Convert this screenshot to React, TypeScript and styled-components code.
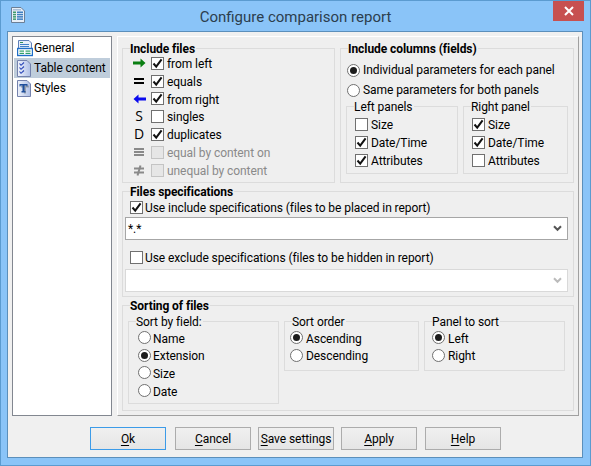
import React from 'react';
import styled, { createGlobalStyle } from 'styled-components';

const GlobalStyle = createGlobalStyle`
  html, body { margin: 0; padding: 0; background: #8ac4f8; }
  #root { width: 591px; height: 466px; overflow: hidden; }
  * { box-sizing: border-box; }
`;

const UI_FONT = `Roboto, "Noto Sans", sans-serif`;

// Window frame
const Window = styled.div`
  width: 591px;
  height: 466px;
  display: flex;
  flex-direction: column;
  background: #8ac4f8;
  border: 1px solid #5b9bd0;
  font-family: ${UI_FONT};
  font-size: 12px;
  letter-spacing: -0.07px;
  color: #000;
`;

const TitleBar = styled.div`
  position: relative;
  height: 30px;
  flex: none;
  display: flex;
  align-items: center;
  justify-content: center;
`;

const TitleIcon = styled.div`
  position: absolute;
  left: 10px;
  top: 6px;
  display: flex;
`;

const TitleText = styled.div`
  font-size: 15px;
  letter-spacing: 0;
  color: #2c3e4e;
  margin-top: 1px;
`;

const CloseButton = styled.div`
  position: absolute;
  right: 6px;
  top: 0;
  width: 31px;
  height: 20px;
  background: #c75050;
  display: flex;
  align-items: center;
  justify-content: center;
`;

const Client = styled.div`
  flex: 1;
  margin: 0 7px 7px 6px;
  background: #f0f0f0;
  border: 1px solid #5b8fbb;
  display: flex;
  flex-direction: column;
  padding: 4px 4px 0 4px;
`;

const Body = styled.div`
  display: flex;
  gap: 5px;
  height: 380px;
`;

// Left navigation list
const NavList = styled.div`
  width: 100px;
  flex: none;
  background: #fff;
  border: 1px solid #828790;
  padding: 1px;
  display: flex;
  flex-direction: column;
`;

const NavItem = styled.div<{ $active?: boolean }>`
  height: 20px;
  display: flex;
  align-items: center;
  gap: 1px;
  padding-left: 3px;
  white-space: nowrap;
  background: ${p => (p.$active ? '#bfcddb' : 'transparent')};
`;

const MainPanel = styled.div`
  width: 462px;
  flex: none;
  background: #efefef;
  border: 1px solid #a0a0a0;
  border-top-color: #fff;
  border-left-color: #fff;
  padding: 11px 4px 0 4px;
  display: flex;
  flex-direction: column;
  gap: 8px;
`;

const TopRow = styled.div`
  display: flex;
  gap: 5px;
`;

// Group boxes
const Group = styled.div<{ $width?: number; $height: number }>`
  position: relative;
  width: ${p => (p.$width ? `${p.$width}px` : 'auto')};
  height: ${p => p.$height}px;
  flex: none;
  border: 1px solid #dcdcdc;
  display: flex;
  flex-direction: column;
`;

const Legend = styled.div<{ $left: number; $bold?: boolean }>`
  position: absolute;
  left: ${p => p.$left}px;
  top: -8px;
  line-height: 16px;
  padding: 0 1px 0 0;
  background: #efefef;
  white-space: nowrap;
  font-weight: ${p => (p.$bold ? 700 : 400)};
`;

const Rows = styled.div<{ $top: number; $left: number }>`
  display: flex;
  flex-direction: column;
  padding: ${p => p.$top}px 0 0 ${p => p.$left}px;
`;

const Row = styled.div<{ $height?: number; $gap?: number; $disabled?: boolean }>`
  height: ${p => p.$height ?? 18}px;
  display: flex;
  align-items: center;
  gap: ${p => p.$gap ?? 3}px;
  white-space: nowrap;
  color: ${p => (p.$disabled ? '#8a8a8a' : '#000')};
`;

// Text beside a box sits one pixel below the box centre
const BoxLabel = styled.span`
  padding-top: 2px;
`;

const Glyph = styled.div`
  width: 16px;
  height: 14px;
  margin-right: 1px;
  flex: none;
  display: flex;
  align-items: center;
  justify-content: center;
  font-size: 14px;
  line-height: 14px;
  font-family: "Open Sans", sans-serif;
`;

const CheckBox = styled.div<{ $disabled?: boolean }>`
  width: 13px;
  height: 13px;
  flex: none;
  border: 1px solid ${p => (p.$disabled ? '#c4c4c4' : '#707070')};
  background: ${p => (p.$disabled ? '#e6e6e6' : '#fff')};
  display: flex;
  align-items: center;
  justify-content: center;
`;

const RadioCircle = styled.div`
  width: 13px;
  height: 13px;
  flex: none;
  border-radius: 50%;
  border: 1px solid #707070;
  background: #fff;
  display: flex;
  align-items: center;
  justify-content: center;
`;

const RadioDot = styled.div`
  width: 7px;
  height: 7px;
  border-radius: 50%;
  background: #1c1c1c;
`;

const SubGroups = styled.div`
  display: flex;
  gap: 5px;
  padding: 6px 0 0 5px;
`;

const SortGroups = styled.div`
  display: flex;
  align-items: flex-start;
  gap: 5px;
  padding: 15px 0 0 5px;
`;

const Combo = styled.div<{ $disabled?: boolean }>`
  height: 23px;
  margin: 0 5px 0 2px;
  background: #fff;
  border: 1px solid ${p => (p.$disabled ? '#d9d9d9' : '#a6a6a6')};
  padding: 0 5px 0 2px;
  display: flex;
  align-items: center;
  justify-content: space-between;
`;

const SpecRow = styled.div<{ $top: number; $bottom: number }>`
  padding: ${p => p.$top}px 0 ${p => p.$bottom}px 7px;
  height: ${p => p.$top + p.$bottom + 14}px;
  display: flex;
  align-items: center;
  gap: 2px;
  white-space: nowrap;
`;

// Bottom buttons
const ButtonBar = styled.div`
  display: flex;
  padding: 11px 0 0 78px;
`;

const Button = styled.div<{ $focused?: boolean; $offset?: number }>`
  width: 76px;
  height: 23px;
  margin-left: ${p => p.$offset ?? 0}px;
  display: flex;
  align-items: center;
  justify-content: center;
  white-space: nowrap;
  background: linear-gradient(#f0f0f0, #e5e5e5);
  border: 1px solid ${p => (p.$focused ? '#3c9be8' : '#acacac')};
  u { text-underline-offset: 2px; }
`;

const Tick = () => (
  <svg width="11" height="11" viewBox="0 0 11 11">
    <path d="M1.5 5.5 L4.2 8.6 L9.6 1.4" fill="none" stroke="#111" strokeWidth="2" />
  </svg>
);

const Check: React.FC<{ on?: boolean; disabled?: boolean }> = ({ on, disabled }) => (
  <CheckBox $disabled={disabled}>{on && <Tick />}</CheckBox>
);

const Radio: React.FC<{ on?: boolean }> = ({ on }) => (
  <RadioCircle>{on && <RadioDot />}</RadioCircle>
);

const Chevron: React.FC<{ color: string }> = ({ color }) => (
  <svg width="9" height="7" viewBox="0 0 9 7">
    <path d="M1 1.2 L4.5 4.8 L8 1.2" fill="none" stroke={color} strokeWidth="2" />
  </svg>
);

const ArrowRight = () => (
  <svg width="13" height="10" viewBox="0 0 13 10">
    <path d="M0 3.5 H7.5 V0.5 L12.5 5 L7.5 9.5 V6.5 H0 Z" fill="#0a7f12" />
  </svg>
);

const ArrowLeft = () => (
  <svg width="13" height="10" viewBox="0 0 13 10">
    <path d="M13 3.5 H5.5 V0.5 L0.5 5 L5.5 9.5 V6.5 H13 Z" fill="#0a0aee" />
  </svg>
);

const EqualIcon: React.FC<{ color: string; lines: number[] }> = ({ color, lines }) => (
  <svg width="12" height="10" viewBox="0 0 12 10">
    {lines.map(y => (
      <rect key={y} x="1" y={y} width="10" height="2" fill={color} />
    ))}
  </svg>
);

const NotEqualIcon = () => (
  <svg width="12" height="11" viewBox="0 0 12 11">
    <rect x="1" y="2.5" width="10" height="2" fill="#8a8a8a" />
    <rect x="1" y="6.5" width="10" height="2" fill="#8a8a8a" />
    <path d="M7.5 0.5 L4.5 10.5" stroke="#8a8a8a" strokeWidth="2" />
  </svg>
);

const GeneralIcon = () => (
  <svg width="16" height="17" viewBox="0 0 16 17">
    <path d="M1.5 0.5 H12 L14.5 3 V9 H1.5 Z" fill="#e6eefa" stroke="#5f7fb8" />
    <rect x="3" y="2" width="3" height="1" fill="#2f8f5a" />
    <rect x="3" y="4" width="9" height="1" fill="#3f7fc8" />
    <rect x="3" y="6" width="9" height="1" fill="#3f7fc8" />
    <rect x="0.5" y="8.5" width="15" height="7" fill="#fff" stroke="#1f6fc8" strokeWidth="1.4" />
    <rect x="2.5" y="10.5" width="4.5" height="1.2" fill="#2fa06a" />
    <rect x="8.5" y="10.5" width="5" height="1.2" fill="#2fa06a" />
    <rect x="2.5" y="12.8" width="4.5" height="1.2" fill="#2fa06a" />
    <rect x="8.5" y="12.8" width="5" height="1.2" fill="#2fa06a" />
  </svg>
);

const TableIcon = () => (
  <svg width="16" height="17" viewBox="0 0 16 17">
    <defs>
      <linearGradient id="tableDoc" x1="0" x2="1" y1="0" y2="0">
        <stop offset="0" stopColor="#f2f5fd" />
        <stop offset="1" stopColor="#aebfe6" />
      </linearGradient>
    </defs>
    <path d="M0.5 0.5 H10 L13.5 4 V16.5 H0.5 Z" fill="url(#tableDoc)" stroke="#7482ad" />
    {[2.5, 6.5, 10.5].map(y => (
      <path key={y} d={`M2.5 ${y + 1} L4 ${y + 2.8} L7 ${y}`} fill="none" stroke="#2a46b8" strokeWidth="1.1" />
    ))}
  </svg>
);

const StylesIcon = () => (
  <svg width="16" height="17" viewBox="0 0 16 17">
    <defs>
      <linearGradient id="stylesDoc" x1="0" x2="1" y1="0" y2="0">
        <stop offset="0" stopColor="#eef2fa" />
        <stop offset="1" stopColor="#aebfe6" />
      </linearGradient>
    </defs>
    <path d="M0.5 0.5 H10 L13.5 4 V16.5 H0.5 Z" fill="url(#stylesDoc)" stroke="#7482ad" />
    <path d="M4 5.5 H12 V7.5 H9 V13.5 H7 V7.5 H4 Z" fill="#9aa2ae" />
    <path d="M2.5 4 H10.5 V6.5 H9.5 V5.5 H7.5 V11 H8.5 V12.5 H4.5 V11 H5.5 V5.5 H3.5 V6.5 H2.5 Z" fill="#1f4f9c" />
  </svg>
);

const AppTitleIcon = () => (
  <svg width="14" height="16" viewBox="0 0 14 16">
    <path d="M0.5 0.5 H10 L13.5 4 V15.5 H0.5 Z" fill="#e8eff8" stroke="#6b7f96" />
    <rect x="2" y="2" width="8" height="1.5" fill="#a9c0d8" />
    {[4.5, 6.8, 9.1, 11.4].map(y => (
      <g key={y}>
        <rect x="2" y={y} width="3" height="1.5" fill="#3f9a6c" />
        <rect x="6" y={y} width="6" height="1.5" fill="#3f7fc0" />
      </g>
    ))}
  </svg>
);

const fileRows = [
  { icon: <ArrowRight />, label: 'from left', on: true },
  { icon: <EqualIcon color="#000" lines={[2, 6]} />, label: 'equals', on: true },
  { icon: <ArrowLeft />, label: 'from right', on: true, height: 17 },
  { icon: 'S', label: 'singles' },
  { icon: 'D', label: 'duplicates', on: true },
  { icon: <EqualIcon color="#8a8a8a" lines={[1, 4, 7]} />, label: 'equal by content on', disabled: true },
  { icon: <NotEqualIcon />, label: 'unequal by content', disabled: true },
];

const FieldChecks: React.FC<{ values: boolean[] }> = ({ values }) => (
  <Rows $top={8} $left={8}>
    {['Size', 'Date/Time', 'Attributes'].map((label, i) => (
      <Row key={label}>
        <Check on={values[i]} />
        <BoxLabel>{label}</BoxLabel>
      </Row>
    ))}
  </Rows>
);

const RadioList: React.FC<{ items: string[]; active: number; left: number; gap: number }> = ({ items, active, left, gap }) => (
  <Rows $top={7} $left={left}>
    {items.map((label, i) => (
      <Row key={label} $gap={gap} $height={17.6}>
        <Radio on={i === active} />
        <BoxLabel>{label}</BoxLabel>
      </Row>
    ))}
  </Rows>
);

export default function App() {
  return (
    <Window>
      <GlobalStyle />
      <TitleBar>
        <TitleIcon><AppTitleIcon /></TitleIcon>
        <TitleText>Configure comparison report</TitleText>
        <CloseButton>
          <svg width="10" height="10" viewBox="0 0 10 10">
            <path d="M1 1 L9 9 M9 1 L1 9" stroke="#fff" strokeWidth="2" />
          </svg>
        </CloseButton>
      </TitleBar>
      <Client>
        <Body>
          <NavList>
            <NavItem><GeneralIcon />General</NavItem>
            <NavItem $active><TableIcon />Table content</NavItem>
            <NavItem><StylesIcon />Styles</NavItem>
          </NavList>
          <MainPanel>
            <TopRow>
              <Group $width={213} $height={135}>
                <Legend $left={7} $bold>Include files</Legend>
                <Rows $top={5} $left={8}>
                  {fileRows.map(r => (
                    <Row key={r.label} $height={r.height} $disabled={r.disabled}>
                      <Glyph>{r.icon}</Glyph>
                      <Check on={r.on} disabled={r.disabled} />
                      <BoxLabel>{r.label}</BoxLabel>
                    </Row>
                  ))}
                </Rows>
              </Group>
              <Group $width={234} $height={135}>
                <Legend $left={7} $bold>Include columns (fields)</Legend>
                <Rows $top={11} $left={6}>
                  <Row $height={20}><Radio on />Individual parameters for each panel</Row>
                  <Row $height={20}><Radio />Same parameters for both panels</Row>
                </Rows>
                <SubGroups>
                  <Group $width={112} $height={68}>
                    <Legend $left={7}>Left panels</Legend>
                    <FieldChecks values={[false, true, true]} />
                  </Group>
                  <Group $width={105} $height={68}>
                    <Legend $left={7}>Right panel</Legend>
                    <FieldChecks values={[true, true, false]} />
                  </Group>
                </SubGroups>
              </Group>
            </TopRow>
            <Group $height={106}>
              <Legend $left={7} $bold>Files specifications</Legend>
              <SpecRow $top={8} $bottom={3}>
                <Check on /><BoxLabel>Use include specifications (files to be placed in report)</BoxLabel>
              </SpecRow>
              <Combo>
                *.*
                <Chevron color="#555" />
              </Combo>
              <SpecRow $top={10} $bottom={5}>
                <Check /><BoxLabel>Use exclude specifications (files to be hidden in report)</BoxLabel>
              </SpecRow>
              <Combo $disabled>
                &nbsp;
                <Chevron color="#bbb" />
              </Combo>
            </Group>
            <Group $height={106}>
              <Legend $left={7} $bold>Sorting of files</Legend>
              <SortGroups>
                <Group $width={151} $height={83}>
                  <Legend $left={7}>Sort by field:</Legend>
                  <RadioList items={['Name', 'Extension', 'Size', 'Date']} active={1} left={9} gap={2} />
                </Group>
                <Group $width={135} $height={50}>
                  <Legend $left={7}>Sort order</Legend>
                  <RadioList items={['Ascending', 'Descending']} active={0} left={5} gap={3} />
                </Group>
                <Group $width={141} $height={50}>
                  <Legend $left={7}>Panel to sort</Legend>
                  <RadioList items={['Left', 'Right']} active={0} left={7} gap={3} />
                </Group>
              </SortGroups>
            </Group>
          </MainPanel>
        </Body>
        <ButtonBar>
          <Button $focused><span><u>O</u>k</span></Button>
          <Button $offset={9}><span><u>C</u>ancel</span></Button>
          <Button $offset={7}><span><u>S</u>ave settings</span></Button>
          <Button $offset={7}><span><u>A</u>pply</span></Button>
          <Button $offset={8}><span><u>H</u>elp</span></Button>
        </ButtonBar>
      </Client>
    </Window>
  );
}
